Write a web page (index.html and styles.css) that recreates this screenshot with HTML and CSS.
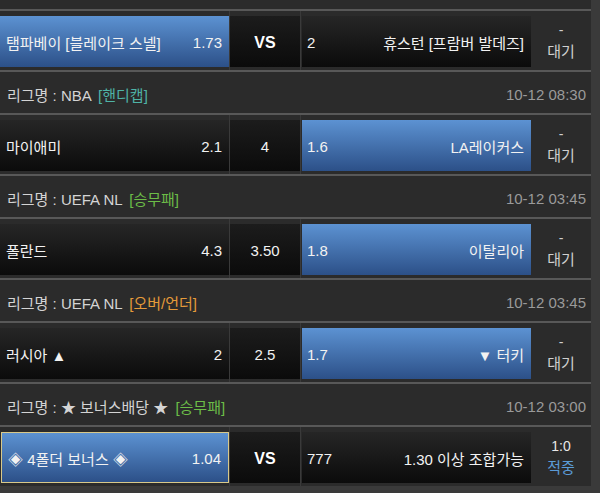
FILE: index.html
```html
<!DOCTYPE html>
<html lang="ko">
<head>
<meta charset="utf-8">
<link rel="stylesheet" href="styles.css">
</head>
<body>
<div class="board">
  <div class="hdr stub"></div>

  <div class="match">
    <div class="cell home"><div class="box sel"><span>탬파베이 [블레이크 스넬]</span><span>1.73</span></div></div>
    <div class="cell mid"><div class="box"><span class="vs">VS</span></div></div>
    <div class="cell away"><div class="box"><span>2</span><span>휴스턴 [프람버 발데즈]</span></div></div>
    <div class="status"><span>-</span><span>대기</span></div>
  </div>

  <div class="hdr"><span class="lg">리그명 : NBA <em class="t-hd">[핸디캡]</em></span><span class="time">10-12 08:30</span></div>

  <div class="match">
    <div class="cell home"><div class="box"><span>마이애미</span><span>2.1</span></div></div>
    <div class="cell mid"><div class="box"><span>4</span></div></div>
    <div class="cell away"><div class="box sel"><span>1.6</span><span>LA레이커스</span></div></div>
    <div class="status"><span>-</span><span>대기</span></div>
  </div>

  <div class="hdr"><span class="lg">리그명 : UEFA NL <em class="t-wdl">[승무패]</em></span><span class="time">10-12 03:45</span></div>

  <div class="match">
    <div class="cell home"><div class="box"><span>폴란드</span><span>4.3</span></div></div>
    <div class="cell mid"><div class="box"><span>3.50</span></div></div>
    <div class="cell away"><div class="box sel"><span>1.8</span><span>이탈리아</span></div></div>
    <div class="status"><span>-</span><span>대기</span></div>
  </div>

  <div class="hdr"><span class="lg">리그명 : UEFA NL <em class="t-ou">[오버/언더]</em></span><span class="time">10-12 03:45</span></div>

  <div class="match">
    <div class="cell home"><div class="box"><span>러시아 ▲</span><span>2</span></div></div>
    <div class="cell mid"><div class="box"><span>2.5</span></div></div>
    <div class="cell away"><div class="box sel"><span>1.7</span><span>▼ 터키</span></div></div>
    <div class="status"><span>-</span><span>대기</span></div>
  </div>

  <div class="hdr"><span class="lg">리그명 : ★ 보너스배당 ★ <em class="t-wdl">[승무패]</em></span><span class="time">10-12 03:00</span></div>

  <div class="match">
    <div class="cell home"><div class="box sel bonus"><span>◈ 4폴더 보너스 ◈</span><span>1.04</span></div></div>
    <div class="cell mid"><div class="box"><span class="vs">VS</span></div></div>
    <div class="cell away"><div class="box"><span>777</span><span>1.30 이상 조합가능</span></div></div>
    <div class="status"><span class="score">1:0</span><span class="hit">적중</span></div>
  </div>
</div>
</body>
</html>
```

FILE: styles.css
```css
* { box-sizing: border-box; }
html, body {
  margin: 0;
  padding: 0;
  background: #3a3a3a;
  font-family: "Liberation Sans", Arial, "Noto Sans CJK KR", sans-serif;
  font-size: 15px;
  color: #f2f2f2;
}
.board {
  width: 591px;
  background: #2b2b2b;
  display: flex;
  flex-direction: column;
}
.hdr {
  height: 43px;
  border-top: 2px solid #585858;
  display: flex;
  justify-content: space-between;
  align-items: center;
  padding: 4px 5px 0 7px;
  color: #d4d4d4;
  font-size: 15px;
}
.hdr.stub {
  height: 9px;
  border-top: 0;
  padding: 0;
}
.hdr em { font-style: normal; margin-left: 3px; }
.t-hd { color: #4fb3a6; }
.t-wdl { color: #6cbd48; }
.t-ou { color: #e59b3a; }
.time { color: #9a9a9a; }

.match {
  height: 61px;
  border-top: 2px solid #585858;
  display: flex;
  align-items: stretch;
}
.cell {
  display: flex;
  padding: 5px 0 3px;
}
.home { width: 229px; }
.mid { width: 72px; border-left: 1px solid #3a3a3a; border-right: 1px solid #3a3a3a; }
.away { width: 230px; }
.box {
  flex: 1;
  display: flex;
  justify-content: space-between;
  align-items: center;
  padding: 2px 7px 0 6px;
  background: linear-gradient(#262626, #0b0b0b);
  white-space: nowrap;
}
.mid .box { justify-content: center; padding: 2px 0 0; background: linear-gradient(#1c1c1c, #0b0b0b); }
.away .box { margin-left: 1px; padding-left: 5px; }
.box.sel {
  background: linear-gradient(#5c92d2, #2c5088);
}
.box.bonus {
  border: 1px solid #d8c98a;
  margin-left: 1px;
}
.vs { font-weight: bold; font-size: 16px; color: #fff; }
.status {
  width: 60px;
  display: flex;
  flex-direction: column;
  align-items: center;
  justify-content: center;
  gap: 2px;
  color: #cfcfcf;
  font-size: 15px;
  padding-top: 1px;
}
.status span:first-child { font-size: 14px; }
.score { color: #e8e8e8; }
.hit { color: #5b9bd8; }
```
